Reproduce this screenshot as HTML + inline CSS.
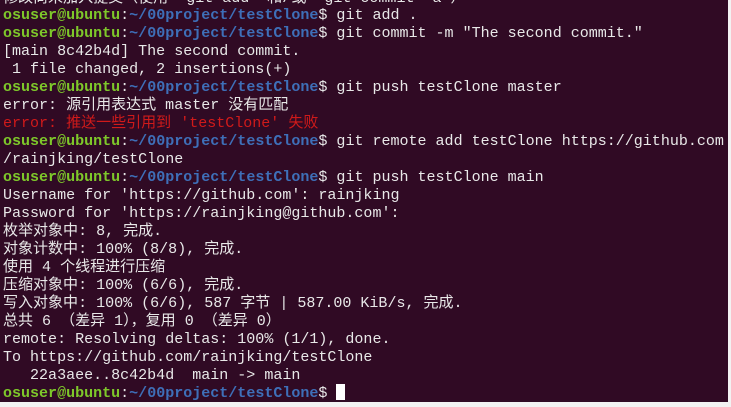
<!DOCTYPE html>
<html><head><meta charset="utf-8"><style>
html,body{margin:0;padding:0;width:731px;height:407px;overflow:hidden;background:#f2f2f2;}
#t{position:absolute;left:0;top:0;width:728px;height:402px;background:#300a24;overflow:hidden;}
pre{position:absolute;left:3px;top:-10.5px;margin:0;font-family:"Liberation Mono","Noto Sans CJK SC",monospace;font-size:15.03px;line-height:17.95px;color:#e8e8e8;white-space:pre;}
.g{color:#7ec82a;font-weight:bold}.b{color:#3e6fb8;font-weight:bold}.r{color:#d01a1a}
.c{display:inline-block;width:9px;height:16px;background:#fff;vertical-align:-3px}
#bot{position:absolute;left:0;top:402px;width:731px;height:5px;}
</style></head><body>
<div id="t"><pre>修改尚未加入提交（使用 "git add" 和/或 "git commit -a"）
<span class="g">osuser@ubuntu</span>:<span class="b">~/00project/testClone</span>$ git add .
<span class="g">osuser@ubuntu</span>:<span class="b">~/00project/testClone</span>$ git commit -m "The second commit."
[main 8c42b4d] The second commit.
 1 file changed, 2 insertions(+)
<span class="g">osuser@ubuntu</span>:<span class="b">~/00project/testClone</span>$ git push testClone master
error: 源引用表达式 master 没有匹配
<span class="r">error: 推送一些引用到 'testClone' 失败</span>
<span class="g">osuser@ubuntu</span>:<span class="b">~/00project/testClone</span>$ git remote add testClone https://github.com
/rainjking/testClone
<span class="g">osuser@ubuntu</span>:<span class="b">~/00project/testClone</span>$ git push testClone main
Username for 'https://github.com': rainjking
Password for 'https://rainjking@github.com':
枚举对象中: 8, 完成.
对象计数中: 100% (8/8), 完成.
使用 4 个线程进行压缩
压缩对象中: 100% (6/6), 完成.
写入对象中: 100% (6/6), 587 字节 | 587.00 KiB/s, 完成.
总共 6 （差异 1），复用 0 （差异 0）
remote: Resolving deltas: 100% (1/1), done.
To https://github.com/rainjking/testClone
   22a3aee..8c42b4d  main -&gt; main
<span class="g">osuser@ubuntu</span>:<span class="b">~/00project/testClone</span>$ <span class="c"></span></pre></div>
<div id="bot"></div>
</body></html>
